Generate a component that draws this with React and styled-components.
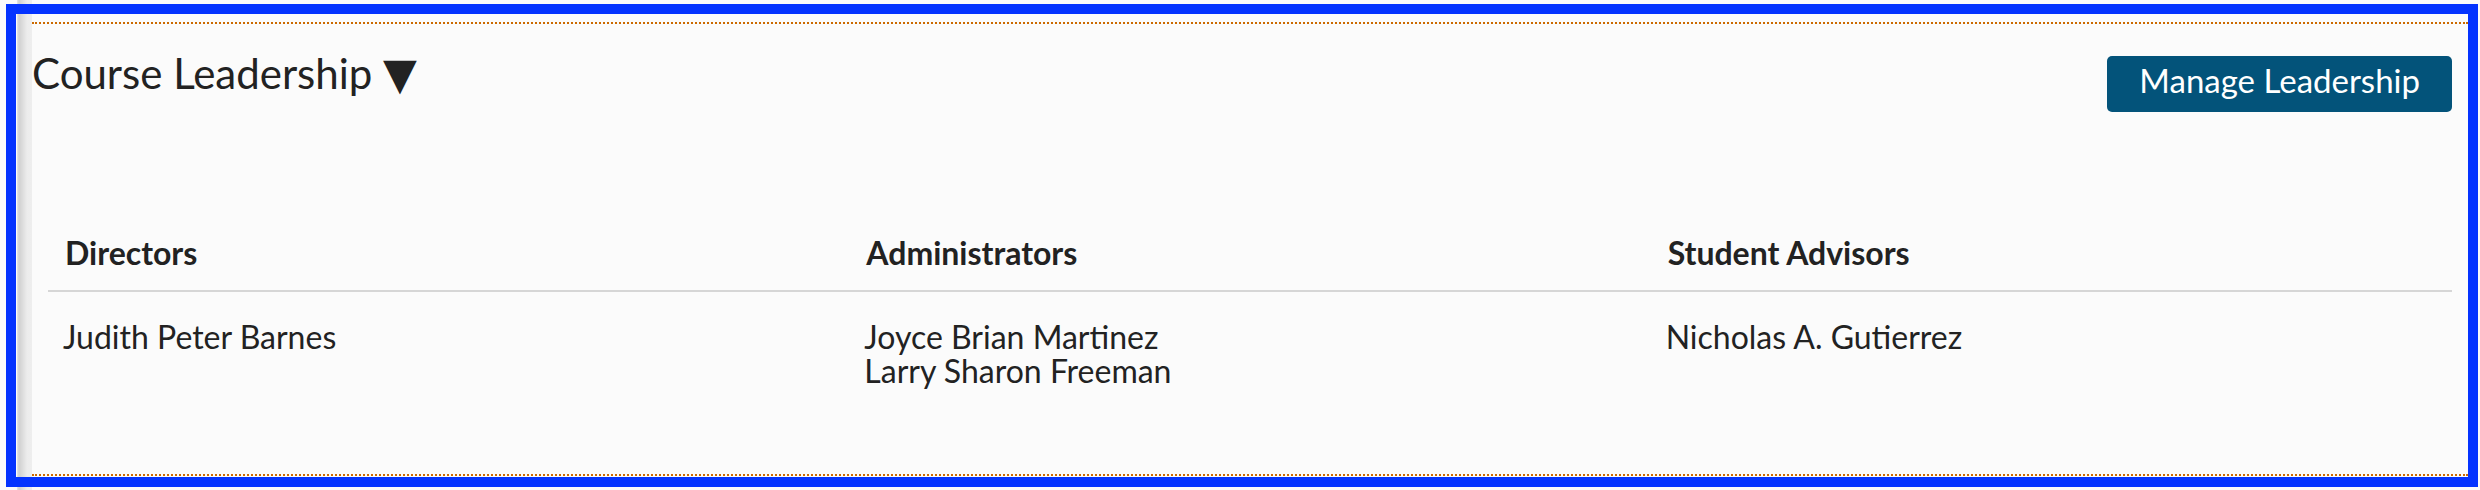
import React from 'react';
import styled, { createGlobalStyle } from 'styled-components';

const GlobalStyle = createGlobalStyle`
  html, body {
    margin: 0;
    padding: 0;
    background: #fbfbfb;
  }
  body {
    font-family: Lato, 'Liberation Sans', sans-serif;
    color: #222;
  }
`;

const directors = ['Judith Peter Barnes'];
const administrators = ['Joyce Brian Martinez', 'Larry Sharon Freeman'];
const advisors = ['Nicholas A. Gutierrez'];

function App() {
  return (
    <Page>
      <GlobalStyle />
      <Gutter />
      <Main>
        <Section>
          <Header>
            <Title>
              Course Leadership <Caret>▼</Caret>
            </Title>
            <ManageButton type="button">Manage Leadership</ManageButton>
          </Header>
          <Table>
            <HeadCell>Directors</HeadCell>
            <HeadCell>Administrators</HeadCell>
            <HeadCell>Student Advisors</HeadCell>
            <Cell>
              {directors.map((name) => (
                <Name key={name}>{name}</Name>
              ))}
            </Cell>
            <Cell>
              {administrators.map((name) => (
                <Name key={name}>{name}</Name>
              ))}
            </Cell>
            <Cell>
              {advisors.map((name) => (
                <Name key={name}>{name}</Name>
              ))}
            </Cell>
          </Table>
        </Section>
      </Main>
      {/* focus highlight drawn over the section */}
      <Highlight />
    </Page>
  );
}

const Page = styled.div`
  position: relative;
  display: flex;
  min-height: 490px;
  padding-left: 17px;
  box-sizing: border-box;
`;
const Gutter = styled.div`
  flex: 0 0 15px;
  background: linear-gradient(
    to right,
    #e6e6e6 0,
    #d0d0d0 2px,
    #dedede 6px,
    #ececec 10px,
    #eeeeee 15px
  );
`;
const Main = styled.div`
  flex: 1;
  padding: 22px 12px 0 0;
`;
const Section = styled.section`
  height: 454px;
  box-sizing: border-box;
  border-top: 2px dotted #cc6a00;
  border-bottom: 2px dotted #cc6a00;
  padding-right: 16px;
`;
const Header = styled.div`
  display: flex;
  justify-content: space-between;
  align-items: flex-start;
  padding-top: 24px;
`;
const Title = styled.h2`
  margin: 0;
  font-size: 42px;
  font-weight: 400;
  line-height: 50px;
  color: #222;
`;
const Caret = styled.span`
  font-family: 'DejaVu Sans', sans-serif;
  font-size: 44px;
  line-height: 1;
`;
const ManageButton = styled.button`
  margin-top: 8px;
  height: 56px;
  padding: 0 32px 8px;
  border: none;
  border-radius: 5px;
  background: #03537a;
  color: #fff;
  font-family: Lato, 'Liberation Sans', sans-serif;
  font-size: 33px;
  line-height: 30px;
`;
const Table = styled.div`
  display: grid;
  grid-template-columns: repeat(3, 1fr);
  margin: 106px 0 0 16px;
`;
const HeadCell = styled.div`
  padding: 18px 17px 20px;
  border-bottom: 2px solid #d6d6d6;
  font-size: 32px;
  font-weight: 700;
  line-height: 34px;
`;
const Cell = styled.div`
  padding: 28px 15px 0;
  font-size: 32px;
  line-height: 34px;
`;
const Name = styled.div``;
const Highlight = styled.div`
  position: absolute;
  left: 6px;
  top: 4px;
  width: 2472px;
  height: 483px;
  box-sizing: border-box;
  border: 10px solid #0433ff;
  pointer-events: none;
`;

export default App;
